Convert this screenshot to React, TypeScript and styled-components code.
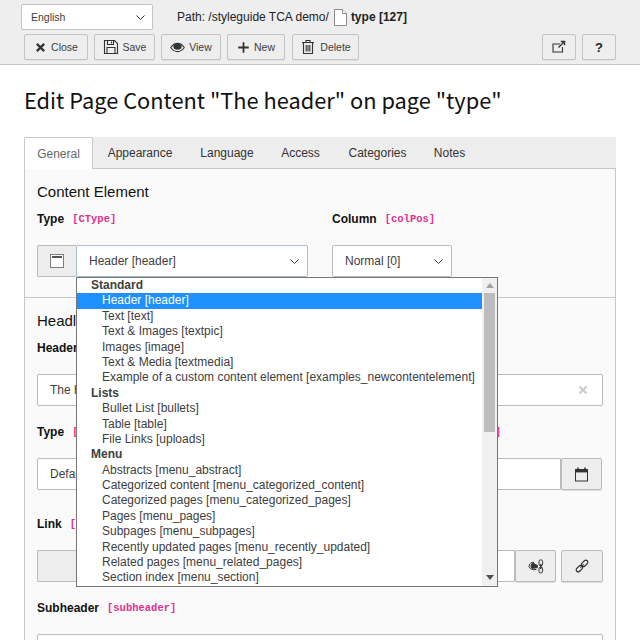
import { createGlobalStyle, styled } from "styled-components";
import type { ReactNode } from "react";

const GlobalStyle = createGlobalStyle`
  html, body {
    margin: 0;
    height: 640px;
    overflow: hidden;
    background: #ffffff;
    font-family: "Liberation Sans", Arial, sans-serif;
    font-size: 12px;
    color: #333333;
  }
  * { box-sizing: border-box; }
`;

const Page = styled.div`
  width: 640px;
  height: 640px;
  overflow: hidden;
`;

const Toolbar = styled.header`
  height: 65px;
  padding-top: 4px;
  background: #eeeeee;
  border-bottom: 1px solid #c3c3c3;
`;

const ToolbarRow = styled.div`
  display: flex;
  align-items: center;
  height: 26px;
`;

const TopRow = styled(ToolbarRow)`
  padding-left: 21px;
`;

const ButtonRow = styled(ToolbarRow)`
  margin-top: 4px;
  padding: 0 24px;
  gap: 6px;
`;

const Spacer = styled.div`
  flex: 1;
`;

const LangSelect = styled.div`
  display: flex;
  align-items: center;
  justify-content: space-between;
  width: 132px;
  height: 26px;
  padding: 0 7px 0 9px;
  background: #ffffff;
  border: 1px solid #c3c3c3;
  border-radius: 2px;
  font-size: 10.5px;
  color: #404040;
`;

const PathBar = styled.div`
  display: flex;
  align-items: center;
  margin-left: 24px;
  font-size: 12px;
  color: #222222;
  b { margin-left: 4px; }
  svg { margin-left: 5px; }
`;

const ToolButton = styled.button<{ $w: number; $mr?: number }>`
  display: flex;
  align-items: center;
  justify-content: center;
  gap: 4px;
  width: ${(p) => p.$w}px;
  height: 26px;
  margin-right: ${(p) => p.$mr ?? 0}px;
  padding: 0;
  background: #eeeeee;
  border: 1px solid #c3c3c3;
  border-radius: 2px;
  box-shadow: 0 1px 0 #e0e0e0;
  font-family: inherit;
  font-size: 10.5px;
  color: #404040;
`;

const HelpMark = styled.b`
  font-size: 13px;
  color: #222222;
`;

const Main = styled.main`
  padding: 0 24px;
`;

const Title = styled.h1`
  margin: 0;
  padding-top: 18px;
  height: 72px;
  font-family: "Noto Sans CJK SC", "Noto Sans", sans-serif;
  font-weight: 400;
  font-size: 21.8px;
  line-height: 33px;
  color: #111111;
`;

const Tabs = styled.nav`
  display: flex;
  height: 32px;
  background: #ededed;
  border-bottom: 1px solid #c8c8c8;
  border-radius: 2px 2px 0 0;
`;

const Tab = styled.div<{ $active?: boolean; $w: number }>`
  display: flex;
  align-items: center;
  justify-content: center;
  width: ${(p) => p.$w}px;
  height: ${(p) => (p.$active ? "32px" : "31px")};
  background: ${(p) => (p.$active ? "#ffffff" : "transparent")};
  border: ${(p) => (p.$active ? "1px solid #c8c8c8" : "none")};
  border-bottom: none;
  border-radius: 2px 2px 0 0;
  color: ${(p) => (p.$active ? "#666666" : "#333333")};
  font-size: 12px;
`;

const Panel = styled.section`
  height: 480px;
  background: #fafafa;
  border-left: 1px solid #c8c8c8;
  border-right: 1px solid #c8c8c8;
`;

const Section = styled.div<{ $divider?: boolean }>`
  padding: 12px 12px ${(p) => (p.$divider ? "20px" : "0")};
  border-bottom: ${(p) => (p.$divider ? "1px solid #c8c8c8" : "none")};
`;

const SectionTitle = styled.h2`
  margin: 0;
  height: 21px;
  font-weight: 400;
  font-size: 15px;
  line-height: 21px;
  color: #111111;
`;

const Grid = styled.div`
  display: grid;
  grid-template-columns: 282px 270px;
  column-gap: 13px;
`;

const Field = styled.div`
  min-width: 0;
`;

const Label = styled.div<{ $top?: number }>`
  display: flex;
  align-items: center;
  gap: 8px;
  height: 16px;
  margin-top: ${(p) => p.$top ?? 18}px;
  margin-bottom: 18px;
  font-weight: 700;
  font-size: 12px;
  color: #111111;
  white-space: nowrap;
`;

const Code = styled.code`
  font-family: "Liberation Mono", monospace;
  font-weight: 700;
  font-size: 10.5px;
  color: #e0318f;
`;

const SelectGroup = styled.div`
  position: relative;
  display: flex;
  width: 271px;
  height: 32px;
`;

const IconAddon = styled.div`
  display: flex;
  align-items: center;
  justify-content: center;
  width: 39px;
  background: #ededed;
  border: 1px solid #bbbbbb;
  border-right: none;
  border-radius: 2px 0 0 2px;
`;

const SelectBox = styled.div<{ $w: number; $focus?: boolean }>`
  display: flex;
  align-items: center;
  justify-content: space-between;
  width: ${(p) => p.$w}px;
  height: 32px;
  padding: 0 8px 0 12px;
  background: #ffffff;
  border: 1px solid ${(p) => (p.$focus ? "#a9bcd0" : "#bbbbbb")};
  border-radius: 2px;
  color: #404040;
`;

const TextInput = styled.div`
  display: flex;
  align-items: center;
  justify-content: space-between;
  height: 32px;
  padding: 0 14px 0 12px;
  background: #ffffff;
  border: 1px solid #bbbbbb;
  border-radius: 2px;
  color: #404040;
`;

const InputGroup = styled.div`
  display: flex;
  align-items: stretch;
  height: 32px;
`;

const GroupInput = styled(TextInput)`
  flex: 1;
  border-radius: 2px 0 0 2px;
`;

const GreyAddon = styled.div`
  width: 100px;
  background: #ededed;
  border: 1px solid #bbbbbb;
  border-right: none;
  border-radius: 2px 0 0 2px;
`;

const IconButton = styled.div<{ $w: number; $gap?: number }>`
  display: flex;
  align-items: center;
  justify-content: center;
  width: ${(p) => p.$w}px;
  margin-left: ${(p) => p.$gap ?? 0}px;
  background: #eeeeee;
  border: 1px solid #bbbbbb;
  border-radius: 2px;
  box-shadow: 0 1px 0 #dddddd;
`;

const Dropdown = styled.div`
  position: absolute;
  top: 32px;
  left: 39px;
  z-index: 5;
  display: flex;
  width: 422px;
  height: 310px;
  background: #ffffff;
  border: 1px solid #767676;
`;

const OptionList = styled.div`
  flex: 1;
  min-width: 0;
`;

const GroupRow = styled.div`
  height: 15.4px;
  padding-left: 14px;
  font-weight: 700;
  line-height: 15px;
  color: #404040;
  white-space: nowrap;
`;

const OptionRow = styled.div<{ $selected?: boolean }>`
  height: 15.4px;
  padding-left: 25px;
  line-height: 15px;
  background: ${(p) => (p.$selected ? "#1e90ff" : "transparent")};
  color: ${(p) => (p.$selected ? "#ffffff" : "#404040")};
  white-space: nowrap;
`;

const Scrollbar = styled.div`
  display: flex;
  flex-direction: column;
  align-items: center;
  width: 15px;
  background: #f0f0f0;
`;

const ScrollArrow = styled.div<{ $down?: boolean }>`
  width: 0;
  height: 0;
  margin-top: ${(p) => (p.$down ? "auto" : "5px")};
  margin-bottom: ${(p) => (p.$down ? "6px" : "0")};
  border-left: 4px solid transparent;
  border-right: 4px solid transparent;
  border-bottom: ${(p) => (p.$down ? "none" : "5px solid #a3a3a3")};
  border-top: ${(p) => (p.$down ? "5px solid #505050" : "none")};
`;

const ScrollThumb = styled.div`
  width: 11px;
  height: 139px;
  margin-top: 5px;
  background: #bdbdbd;
`;

const Svg = ({ s = 14, children }: { s?: number; children: ReactNode }) => (
  <svg width={s} height={s} viewBox="0 0 16 16" fill="none" stroke="#333" strokeWidth="1.1">
    {children}
  </svg>
);

const Chevron = () => (
  <svg width="9" height="5" viewBox="0 0 9 5" fill="none" stroke="#333" strokeWidth="1">
    <path d="M.5.5l4 4 4-4" />
  </svg>
);

const CloseIcon = () => (
  <Svg s={13}>
    <path d="M3.5 3.5l9 9M12.5 3.5l-9 9" strokeWidth="2.8" />
  </Svg>
);

const SaveIcon = () => (
  <Svg s={16}>
    <path d="M1.5 1.5h10l3 3v10h-13z" />
    <path d="M4.5 1.5v4h6v-4M8.5 2.5v2" />
    <path d="M4 14.5v-6h8v6" />
  </Svg>
);

const EyeIcon = () => (
  <Svg s={15}>
    <path d="M.8 8C3 4.8 5.4 3.6 8 3.6s5 1.2 7.2 4.4C13 11.2 10.6 12.4 8 12.4S3 11.2.8 8z" />
    <ellipse cx="8" cy="7.2" rx="4.4" ry="3.2" fill="#333" stroke="none" />
  </Svg>
);

const PlusIcon = () => (
  <Svg s={13}>
    <path d="M8 1.5v13M1.5 8h13" strokeWidth="2.2" />
  </Svg>
);

const TrashIcon = () => (
  <Svg s={16}>
    <path d="M2 3.5h12M6 3.5v-2h4v2M3.5 3.5v11h9v-11M6.2 6v6.5M8 6v6.5M9.8 6v6.5" />
  </Svg>
);

const ShareIcon = () => (
  <Svg s={16}>
    <path d="M11.5 8v5H2V5h7" />
    <path d="M7.5 8.5L13 3M9.8 2.5h3.7v3.7" strokeWidth="1.4" />
  </Svg>
);

const PageIcon = () => (
  <svg width="13" height="17" viewBox="0 0 13 17" fill="#fff" stroke="#8a8a8a" strokeWidth="1">
    <path d="M.5.5h8l4 4v12H.5z" />
    <path d="M8.5.5v4h4" />
  </svg>
);

const ContentIcon = () => (
  <svg width="14" height="14" viewBox="0 0 14 14" fill="#fff" stroke="#7d7d7d" strokeWidth="1">
    <rect x=".5" y=".5" width="13" height="13" />
    <rect x="2" y="2" width="10" height="2" fill="#555" stroke="none" />
  </svg>
);

const CalendarIcon = () => (
  <svg width="14" height="15" viewBox="0 0 14 15" fill="none" stroke="#333" strokeWidth="1">
    <rect x=".5" y="2.5" width="12" height="11.5" />
    <rect x="1" y="3" width="11" height="2.4" fill="#333" stroke="none" />
    <path d="M3 .5v3M10 .5v3" strokeWidth="1.6" />
  </svg>
);

const PageLinkIcon = () => (
  <svg width="16" height="15" viewBox="0 0 16 15" fill="none" stroke="#333" strokeWidth="1">
    <path d="M6 3.4A4.2 4.2 0 0 0 1 7.6 M1 7.6C2 10 5 11.4 8.4 10.4" />
    <path d="M5 4.2A3 3 0 0 0 4.2 9.4L9.4 8.6V6.4z" fill="#333" />
    <rect x="11" y=".8" width="3.6" height="6" rx="1.8" />
    <rect x="11" y="8" width="3.6" height="6" rx="1.8" />
    <path d="M12.8 5v5" strokeWidth="1.4" />
  </svg>
);

const LinkIcon = () => (
  <svg width="14" height="14" viewBox="0 0 14 14" fill="none" stroke="#333" strokeWidth="1.2">
    <rect x="-3.7" y="-2" width="7.4" height="4" rx="2" transform="translate(4.4 9.6) rotate(-45)" />
    <rect x="-3.7" y="-2" width="7.4" height="4" rx="2" transform="translate(9.6 4.4) rotate(-45)" />
    <path d="M5.4 8.6l3.2-3.2" />
  </svg>
);

const ClearIcon = () => (
  <svg width="10" height="10" viewBox="0 0 10 10" fill="none" stroke="#cccccc" strokeWidth="2">
    <path d="M1.5 1.5l7 7M8.5 1.5l-7 7" />
  </svg>
);

type Entry = { group?: boolean; selected?: boolean; text: string };

const entries: Entry[] = [
  { group: true, text: "Standard" },
  { selected: true, text: "Header [header]" },
  { text: "Text [text]" },
  { text: "Text & Images [textpic]" },
  { text: "Images [image]" },
  { text: "Text & Media [textmedia]" },
  { text: "Example of a custom content element [examples_newcontentelement]" },
  { group: true, text: "Lists" },
  { text: "Bullet List [bullets]" },
  { text: "Table [table]" },
  { text: "File Links [uploads]" },
  { group: true, text: "Menu" },
  { text: "Abstracts [menu_abstract]" },
  { text: "Categorized content [menu_categorized_content]" },
  { text: "Categorized pages [menu_categorized_pages]" },
  { text: "Pages [menu_pages]" },
  { text: "Subpages [menu_subpages]" },
  { text: "Recently updated pages [menu_recently_updated]" },
  { text: "Related pages [menu_related_pages]" },
  { text: "Section index [menu_section]" },
];

const tabs: [string, number][] = [
  ["General", 69],
  ["Appearance", 94],
  ["Language", 80],
  ["Access", 67],
  ["Categories", 87],
  ["Notes", 57],
];

export default function App() {
  return (
    <Page>
      <GlobalStyle />
      <Toolbar>
        <TopRow>
          <LangSelect>
            English
            <Chevron />
          </LangSelect>
          <PathBar>
            Path: /styleguide TCA demo/
            <PageIcon />
            <b>type [127]</b>
          </PathBar>
        </TopRow>
        <ButtonRow>
          <ToolButton $w={64}><CloseIcon />Close</ToolButton>
          <ToolButton $w={61}><SaveIcon />Save</ToolButton>
          <ToolButton $w={60}><EyeIcon />View</ToolButton>
          <ToolButton $w={58} $mr={1}><PlusIcon />New</ToolButton>
          <ToolButton $w={67}><TrashIcon />Delete</ToolButton>
          <Spacer />
          <ToolButton $w={34}><ShareIcon /></ToolButton>
          <ToolButton $w={34}><HelpMark>?</HelpMark></ToolButton>
        </ButtonRow>
      </Toolbar>
      <Main>
        <Title>Edit Page Content "The header" on page "type"</Title>
        <Tabs>
          {tabs.map(([name, w], i) => (
            <Tab key={name} $w={w} $active={i === 0}>{name}</Tab>
          ))}
        </Tabs>
        <Panel>
          <Section $divider>
            <SectionTitle>Content Element</SectionTitle>
            <Grid>
              <Field>
                <Label $top={9}>Type <Code>[CType]</Code></Label>
                <SelectGroup>
                  <IconAddon><ContentIcon /></IconAddon>
                  <SelectBox $w={232} $focus>
                    Header [header]
                    <Chevron />
                  </SelectBox>
                  <Dropdown>
                    <OptionList>
                      {entries.map((e) =>
                        e.group ? (
                          <GroupRow key={e.text}>{e.text}</GroupRow>
                        ) : (
                          <OptionRow key={e.text} $selected={e.selected}>{e.text}</OptionRow>
                        )
                      )}
                    </OptionList>
                    <Scrollbar>
                      <ScrollArrow />
                      <ScrollThumb />
                      <ScrollArrow $down />
                    </Scrollbar>
                  </Dropdown>
                </SelectGroup>
              </Field>
              <Field>
                <Label $top={9}>Column <Code>[colPos]</Code></Label>
                <SelectBox $w={120}>
                  Normal [0]
                  <Chevron />
                </SelectBox>
              </Field>
            </Grid>
          </Section>
          <Section>
            <SectionTitle>Headlines</SectionTitle>
            <Label $top={9}>Header <Code>[header]</Code></Label>
            <TextInput>
              The header
              <ClearIcon />
            </TextInput>
            <Grid>
              <Field>
                <Label>Type <Code>[header_layout]</Code></Label>
                <TextInput>Default</TextInput>
              </Field>
              <Field>
                <Label>Date time <Code>[header_position]</Code></Label>
                <InputGroup>
                  <GroupInput />
                  <IconButton $w={41}><CalendarIcon /></IconButton>
                </InputGroup>
              </Field>
            </Grid>
            <Label $top={26}>Link <Code>[header_link]</Code></Label>
            <InputGroup>
              <GreyAddon />
              <GroupInput />
              <IconButton $w={41}><PageLinkIcon /></IconButton>
              <IconButton $w={42} $gap={5}><LinkIcon /></IconButton>
            </InputGroup>
            <Label>Subheader <Code>[subheader]</Code></Label>
            <TextInput />
          </Section>
        </Panel>
      </Main>
    </Page>
  );
}
